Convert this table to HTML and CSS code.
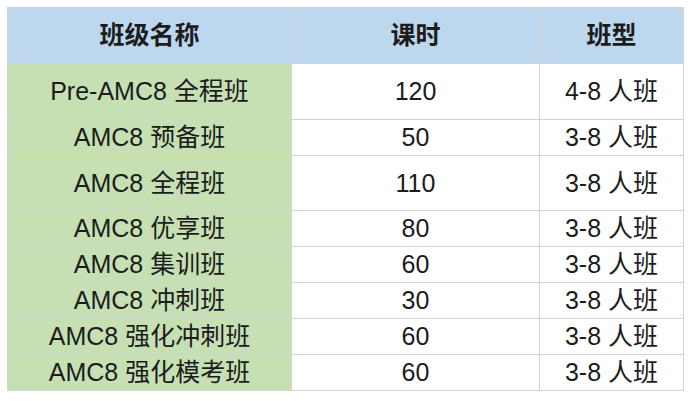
FILE: index.html
```html
<!DOCTYPE html>
<html lang="zh">
<head>
<meta charset="utf-8">
<link rel="stylesheet" href="styles.css">
</head>
<body>
<div class="wrap">
<table class="grid">
  <colgroup>
    <col class="c1"><col class="c2"><col class="c3">
  </colgroup>
  <thead>
    <tr class="tall"><th class="head">班级名称</th><th class="head">课时</th><th class="head">班型</th></tr>
  </thead>
  <tbody>
    <tr class="tall"><td class="name">Pre-AMC8 全程班</td><td>120</td><td>4-8 人班</td></tr>
    <tr class="short"><td class="name">AMC8 预备班</td><td>50</td><td>3-8 人班</td></tr>
    <tr class="tall2"><td class="name">AMC8 全程班</td><td>110</td><td>3-8 人班</td></tr>
    <tr class="short"><td class="name">AMC8 优享班</td><td>80</td><td>3-8 人班</td></tr>
    <tr class="short"><td class="name">AMC8 集训班</td><td>60</td><td>3-8 人班</td></tr>
    <tr class="short"><td class="name">AMC8 冲刺班</td><td>30</td><td>3-8 人班</td></tr>
    <tr class="short"><td class="name">AMC8 强化冲刺班</td><td>60</td><td>3-8 人班</td></tr>
    <tr class="short"><td class="name">AMC8 强化模考班</td><td>60</td><td>3-8 人班</td></tr>
  </tbody>
</table>
</div>
</body>
</html>
```
FILE: styles.css
```css
html, body {
  margin: 0;
  padding: 0;
  background: #ffffff;
}
.wrap {
  padding: 7px;
}
.grid {
  border-collapse: collapse;
  table-layout: fixed;
  width: 676px;
  font-family: "Liberation Sans", "Noto Sans CJK SC", sans-serif;
  font-size: 25px;
  color: #1c1c1c;
}
.c1 { width: 284px; }
.c2 { width: 248px; }
.c3 { width: 144px; }
.grid th, .grid td {
  border: 1px solid #d2d2d2;
  padding: 0;
  text-align: center;
  vertical-align: middle;
  line-height: 1;
}
.grid th.head {
  background: #bdd7ee;
  font-weight: bold;
}
.grid td.name {
  background: #c6e0b4;
}
.tall th, .tall td { height: 55px; }
.tall2 td { height: 54px; }
.short td { height: 35px; }
```
